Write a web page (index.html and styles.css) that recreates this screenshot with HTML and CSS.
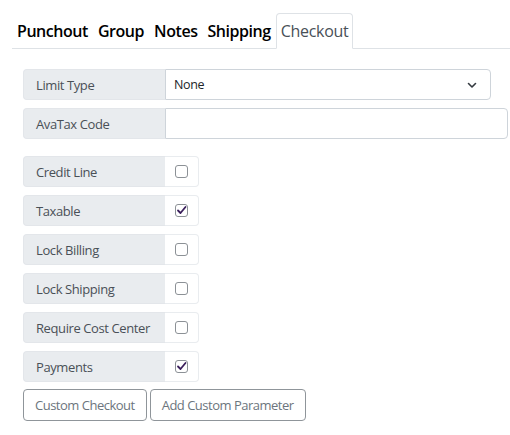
FILE: index.html
```html
<!DOCTYPE html>
<html>
<head>
<meta charset="utf-8">
<link rel="stylesheet" href="styles.css">
</head>
<body>
<div class="page">
  <nav class="tabs">
    <a class="tab">Punchout</a>
    <a class="tab">Group</a>
    <a class="tab">Notes</a>
    <a class="tab">Shipping</a>
    <a class="tab active">Checkout</a>
  </nav>
  <form class="form">
    <div class="group">
      <span class="label">Limit Type</span>
      <div class="select">
        <span>None</span>
        <svg class="chev" width="10" height="8" viewBox="0 0 10 8"><path d="M1.5 2.5 L5 6 L8.5 2.5" fill="none" stroke="#343a40" stroke-width="1.6" stroke-linecap="round" stroke-linejoin="round"/></svg>
      </div>
    </div>
    <div class="group">
      <span class="label">AvaTax Code</span>
      <div class="input"></div>
    </div>
    <div class="checks">
      <div class="group">
        <span class="label">Credit Line</span>
        <span class="cell"><span class="box"></span></span>
      </div>
      <div class="group">
        <span class="label">Taxable</span>
        <span class="cell"><span class="box"><svg width="11" height="11" viewBox="0 0 11 11"><path d="M2 5.5 L4.5 8 L9.5 2" fill="none" stroke="#3b1f5c" stroke-width="1.8" stroke-linecap="round" stroke-linejoin="round"/></svg></span></span>
      </div>
      <div class="group">
        <span class="label">Lock Billing</span>
        <span class="cell"><span class="box"></span></span>
      </div>
      <div class="group">
        <span class="label">Lock Shipping</span>
        <span class="cell"><span class="box"></span></span>
      </div>
      <div class="group">
        <span class="label">Require Cost Center</span>
        <span class="cell"><span class="box"></span></span>
      </div>
      <div class="group">
        <span class="label">Payments</span>
        <span class="cell"><span class="box"><svg width="11" height="11" viewBox="0 0 11 11"><path d="M2 5.5 L4.5 8 L9.5 2" fill="none" stroke="#3b1f5c" stroke-width="1.8" stroke-linecap="round" stroke-linejoin="round"/></svg></span></span>
      </div>
    </div>
    <div class="buttons">
      <button type="button" class="btn">Custom Checkout</button>
      <button type="button" class="btn">Add Custom Parameter</button>
    </div>
  </form>
</div>
</body>
</html>
```
FILE: styles.css
```css
* { box-sizing: border-box; }
body {
  margin: 0;
  background: #fff;
  font-family: "Open Sans", "Noto Sans", sans-serif;
  color: #495057;
}
.page {
  padding: 13px 0 0 12px;
}
.tabs {
  display: flex;
  border-bottom: 1px solid #dee2e6;
}
.tab {
  display: block;
  padding: 4px 4px;
  border: 1px solid transparent;
  border-top-left-radius: 4px;
  border-top-right-radius: 4px;
  margin-bottom: -1px;
  font-size: 16px;
  line-height: 26px;
  font-weight: 600;
  letter-spacing: -0.45px;
  color: #000;
}
.tab.active {
  font-weight: 400;
  color: #495057;
  background: #fff;
  border-color: #dee2e6 #dee2e6 #fff;
  letter-spacing: -0.3px;
}
.form {
  padding: 20px 0 0 11px;
  display: flex;
  flex-direction: column;
}
.group {
  display: flex;
  height: 31px;
  margin-bottom: 8px;
  font-size: 13px;
  letter-spacing: -0.4px;
}
.label {
  width: 142px;
  flex: none;
  display: flex;
  align-items: center;
  padding-left: 12px;
  background: #e9ecef;
  border: 1px solid #e3e6ea;
  border-right: none;
  border-radius: 4px 0 0 4px;
  color: #495057;
}
.select, .input {
  border: 1px solid #ced4da;
  border-radius: 0 4px 4px 0;
  background: #fff;
  display: flex;
  align-items: center;
  justify-content: space-between;
  padding: 0 12px 0 8px;
  color: #212529;
  font-size: 12.5px;
}
.select { width: 326px; }
.input { width: 343px; }
.chev { margin-right: 1px; }
.checks {
  margin-top: 9px;
}
.cell {
  width: 34px;
  flex: none;
  display: flex;
  align-items: center;
  justify-content: center;
  border: 1px solid #e9ecef;
  border-left: none;
  border-radius: 0 4px 4px 0;
}
.box {
  width: 13px;
  height: 13px;
  border: 1px solid #8c9196;
  border-radius: 3px;
  display: flex;
  align-items: center;
  justify-content: center;
  background: #fff;
}
.box svg { display: block; }
.buttons {
  display: flex;
  gap: 3px;
  margin-top: -1px;
}
.btn {
  height: 32px;
  padding: 0 11px;
  border: 1px solid #8f959a;
  border-radius: 4px;
  background: #fff;
  font-family: inherit;
  font-size: 13px;
  letter-spacing: -0.5px;
  color: #6c757d;
}
```
